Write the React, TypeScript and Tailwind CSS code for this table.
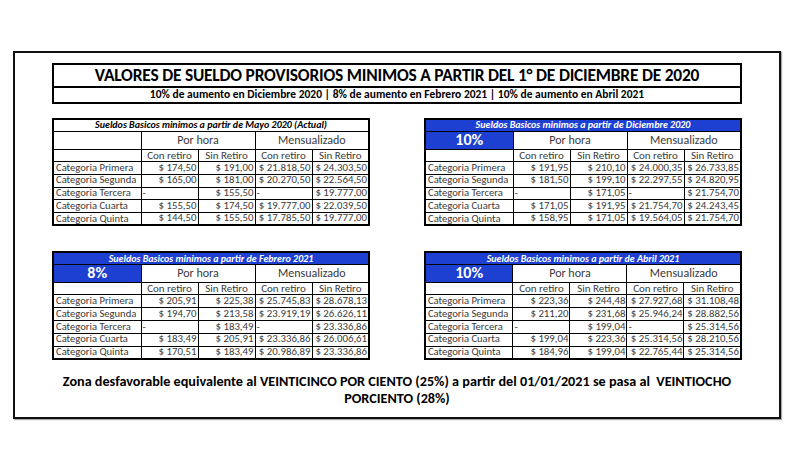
import React from "react";

type Row = [string, string, string, string, string];

interface SalaryTable {
  title: string;
  badge?: string;
  rows: Row[];
}

const tables: SalaryTable[] = [
  {
    title: "Sueldos Basicos minimos a partir de Mayo 2020 (Actual)",
    rows: [
      ["Categoria Primera", "$ 174,50", "$ 191,00", "$ 21.818,50", "$ 24.303,50"],
      ["Categoria Segunda", "$ 165,00", "$ 181,00", "$ 20.270,50", "$ 22.564,50"],
      ["Categoria Tercera", "-", "$ 155,50", "-", "$ 19.777,00"],
      ["Categoria Cuarta", "$ 155,50", "$ 174,50", "$ 19.777,00", "$ 22.039,50"],
      ["Categoria Quinta", "$ 144,50", "$ 155,50", "$ 17.785,50", "$ 19.777,00"],
    ],
  },
  {
    title: "Sueldos Basicos minimos a partir de Diciembre 2020",
    badge: "10%",
    rows: [
      ["Categoria Primera", "$ 191,95", "$ 210,10", "$ 24.000,35", "$ 26.733,85"],
      ["Categoria Segunda", "$ 181,50", "$ 199,10", "$ 22.297,55", "$ 24.820,95"],
      ["Categoria Tercera", "-", "$ 171,05", "-", "$ 21.754,70"],
      ["Categoria Cuarta", "$ 171,05", "$ 191,95", "$ 21.754,70", "$ 24.243,45"],
      ["Categoria Quinta", "$ 158,95", "$ 171,05", "$ 19.564,05", "$ 21.754,70"],
    ],
  },
  {
    title: "Sueldos Basicos minimos a partir de Febrero 2021",
    badge: "8%",
    rows: [
      ["Categoria Primera", "$ 205,91", "$ 225,38", "$ 25.745,83", "$ 28.678,13"],
      ["Categoria Segunda", "$ 194,70", "$ 213,58", "$ 23.919,19", "$ 26.626,11"],
      ["Categoria Tercera", "-", "$ 183,49", "-", "$ 23.336,86"],
      ["Categoria Cuarta", "$ 183,49", "$ 205,91", "$ 23.336,86", "$ 26.006,61"],
      ["Categoria Quinta", "$ 170,51", "$ 183,49", "$ 20.986,89", "$ 23.336,86"],
    ],
  },
  {
    title: "Sueldos Basicos minimos a partir de Abril 2021",
    badge: "10%",
    rows: [
      ["Categoria Primera", "$ 223,36", "$ 244,48", "$ 27.927,68", "$ 31.108,48"],
      ["Categoria Segunda", "$ 211,20", "$ 231,68", "$ 25.946,24", "$ 28.882,56"],
      ["Categoria Tercera", "-", "$ 199,04", "-", "$ 25.314,56"],
      ["Categoria Cuarta", "$ 199,04", "$ 223,36", "$ 25.314,56", "$ 28.210,56"],
      ["Categoria Quinta", "$ 184,96", "$ 199,04", "$ 22.765,44", "$ 25.314,56"],
    ],
  },
];

function ValueCell({ value }: { value: string }) {
  // the dash cells sit on the left, amounts on the right
  return (
    <td
      className={`border border-black px-[1px] h-[12.8px] leading-none whitespace-nowrap ${
        value === "-" ? "text-left" : "text-right"
      }`}
    >
      {value}
    </td>
  );
}

function Table({ table }: { table: SalaryTable }) {
  const blue = !!table.badge;
  return (
    <table className="w-[316px] table-fixed border-collapse border-2 border-black text-[10.8px] text-[#3a3a3a]">
      <colgroup>
        <col className="w-[88px]" />
        <col className="w-[57px]" />
        <col className="w-[57px]" />
        <col className="w-[57px]" />
        <col className="w-[57px]" />
      </colgroup>
      <tbody>
        <tr>
          <td
            colSpan={5}
            className={`h-[12px] border border-black text-center text-[10px] font-bold italic leading-none ${
              blue ? "bg-[#1d3fd2] text-white" : "bg-white text-black"
            }`}
          >
            {table.title}
          </td>
        </tr>
        <tr>
          <td
            className={`h-[18px] border border-black text-center text-[16px] font-bold leading-none ${
              blue ? "bg-[#1d3fd2] text-white" : ""
            }`}
          >
            {table.badge}
          </td>
          <td colSpan={2} className="border border-black text-center text-[12px] leading-none">
            Por hora
          </td>
          <td colSpan={2} className="border border-black text-center text-[12px] leading-none">
            Mensualizado
          </td>
        </tr>
        <tr>
          <td className="h-[12.5px] border border-black" />
          <td className="border border-black text-center text-[11px] leading-none">Con retiro</td>
          <td className="border border-black text-center text-[11px] leading-none">Sin Retiro</td>
          <td className="border border-black text-center text-[11px] leading-none">Con retiro</td>
          <td className="border border-black text-center text-[11px] leading-none">Sin Retiro</td>
        </tr>
        {table.rows.map((row) => (
          <tr key={row[0]}>
            <td className="border border-black px-[2px] text-left text-[10.6px] leading-none whitespace-nowrap">
              {row[0]}
            </td>
            <ValueCell value={row[1]} />
            <ValueCell value={row[2]} />
            <ValueCell value={row[3]} />
            <ValueCell value={row[4]} />
          </tr>
        ))}
      </tbody>
    </table>
  );
}

export default function App() {
  return (
    <div className="w-[800px] h-[466px] bg-white pt-[51px] pl-[13px] font-['Carlito','Lato','Liberation_Sans',sans-serif]">
      <div className="w-[768px] h-[368px] border-2 border-[#111] shadow-[1px_1px_1px_rgba(0,0,0,0.35)] flex flex-col items-center">
        <div className="mt-[10px] w-[690px] border-2 border-black">
          <div className="h-[21px] flex items-center justify-center text-[17.4px] font-bold text-black tracking-[-0.2px]">
            VALORES DE SUELDO PROVISORIOS MINIMOS A PARTIR DEL 1° DE DICIEMBRE DE 2020
          </div>
          <div className="h-[16px] border-t-2 border-black flex items-center justify-center text-[11.5px] font-bold text-black">
            10% de aumento en Diciembre 2020 | 8% de aumento en Febrero 2021 | 10% de aumento en Abril 2021
          </div>
        </div>

        <div className="mt-[14px] w-[690px] flex justify-between">
          <Table table={tables[0]} />
          <Table table={tables[1]} />
        </div>
        <div className="mt-[25px] w-[690px] flex justify-between">
          <Table table={tables[2]} />
          <Table table={tables[3]} />
        </div>

        <p className="mt-[13px] w-[720px] text-center text-[14.2px] font-bold leading-[17px] text-black">
          Zona desfavorable equivalente al VEINTICINCO POR CIENTO (25%) a partir del 01/01/2021 se pasa al&nbsp; VEINTIOCHO
          <br />
          PORCIENTO (28%)
        </p>
      </div>
    </div>
  );
}
